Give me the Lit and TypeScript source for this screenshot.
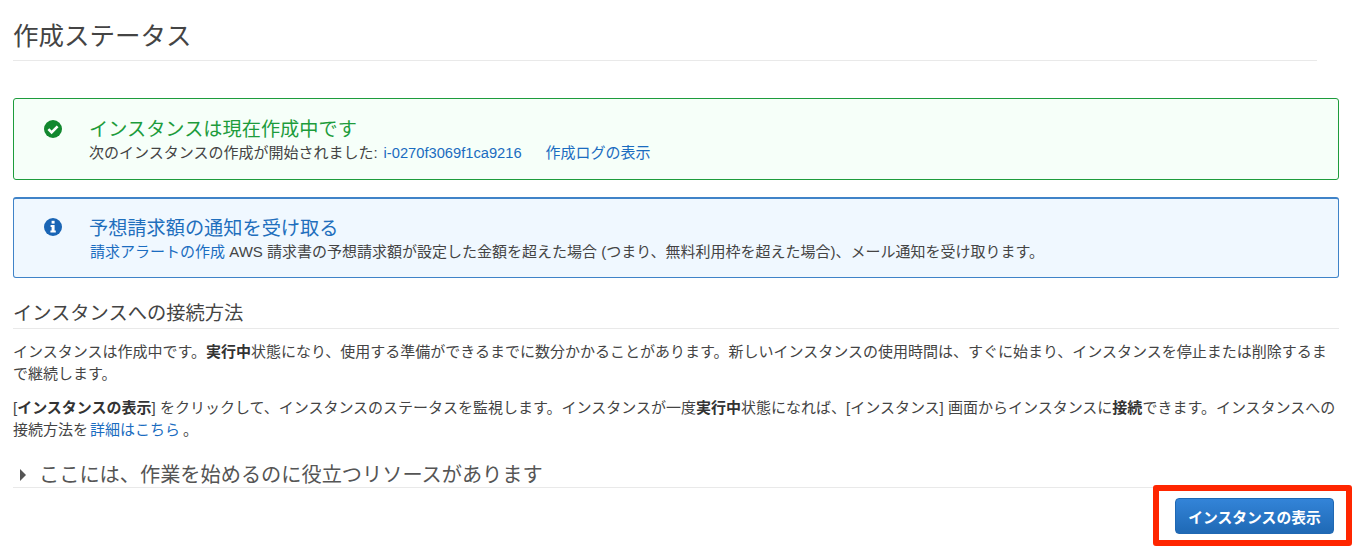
import { LitElement, html, css } from "lit";
import { customElement } from "lit/decorators.js";

@customElement("app-root")
export class AppRoot extends LitElement {
  static styles = css`
    :host {
      display: block;
      position: relative;
      width: 1352px;
      height: 560px;
      overflow: hidden;
      background: #fff;
      color: #444;
      font-family: "Liberation Sans", "Noto Sans CJK JP", sans-serif;
    }
    .page { padding: 18px 13px 0; display: flex; flex-direction: column; }
    h1 {
      margin: 0 22px 0 0;
      height: 42px;
      line-height: 36px;
      font-size: 25.5px;
      font-weight: 400;
      color: #444;
      border-bottom: 1px solid #e9e9e9;
    }
    .alert {
      box-sizing: border-box;
      height: 82px;
      border-radius: 3px;
      display: flex;
      padding: 18px 0 0 29px;
    }
    .alert svg { width: 20px; height: 20px; margin-top: 2px; flex: none; }
    .alert .body { margin-left: 26px; }
    .success { margin-top: 37px; background: #f6fff9; border: 1px solid #1d9c3c; }
    .info { margin-top: 17px; background: #f0f8ff; border: 1px solid #3f83c8; border-top-width: 2px; height: 81px; padding-top: 16px; }
    .title { font-size: 19.2px; line-height: 26px; }
    .success .title { color: #1d9c3c; }
    .info .title { color: #1f6fbd; line-height: 27px; }
    .sub { font-size: 15px; line-height: 19px; color: #444; white-space: nowrap; }
    .info .sub { padding-left: 1px; }
    a { color: #1a6cc0; text-decoration: none; }
    .sub a.log { margin-left: 24px; }
    .sub .id { margin-left: 6px; font-size: 14.7px; }
    h2 {
      margin: 23px 0 0;
      height: 27px;
      font-size: 19.25px;
      line-height: 26px;
      font-weight: 400;
      color: #444;
      border-bottom: 1px solid #e9e9e9;
    }
    p {
      margin: 0;
      font-size: 15px;
      line-height: 22px;
      color: #444;
    }
    p b { font-weight: 700; color: #333; }
    p.first { margin-top: 12px; }
    p.second { margin-top: 12px; }
    p a { margin: 0 3px 0 2px; }
    .expander {
      margin-top: 17px;
      height: 30px;
      box-sizing: border-box;
      padding-top: 4px;
      border-bottom: 1px solid #e9e9e9;
      display: flex;
      align-items: center;
      font-size: 20.2px;
      line-height: 28px;
      color: #555;
    }
    .expander svg { width: 8px; height: 12px; margin: 0 0 0 6px; flex: none; }
    .expander span { margin-left: 12px; }
    .actions { display: flex; justify-content: flex-end; padding: 10px 5px 0 0; }
    button {
      width: 159px;
      height: 36px;
      border: 1px solid #1f68b3;
      border-radius: 4px;
      background: linear-gradient(#3384d8, #1f69b5);
      color: #fff;
      font: 700 14.8px "Liberation Sans", "Noto Sans CJK JP", sans-serif;
      padding: 0;
    }
    .mark {
      position: absolute;
      left: 1153px;
      top: 485px;
      width: 199px;
      height: 61px;
      box-sizing: border-box;
      border: 6px solid #ff2600;
      border-radius: 3px;
      pointer-events: none;
    }
  `;

  render() {
    return html`
      <div class="page">
        <h1>作成ステータス</h1>
        <div class="alert success">
          <svg viewBox="0 0 20 20" aria-hidden="true">
            <circle cx="10" cy="10" r="9" fill="#12882f"></circle>
            <path d="M5.4 10.2l3.2 3.2 6-6" fill="none" stroke="#fff" stroke-width="2.6"></path>
          </svg>
          <div class="body">
            <div class="title">インスタンスは現在作成中です</div>
            <div class="sub">次のインスタンスの作成が開始されました:<a class="id" href="#">i-0270f3069f1ca9216</a><a class="log" href="#">作成ログの表示</a></div>
          </div>
        </div>
        <div class="alert info">
          <svg viewBox="0 0 20 20" aria-hidden="true">
            <circle cx="10" cy="10" r="9" fill="#1a65b5"></circle>
            <rect x="8.6" y="3.8" width="3" height="2.8" fill="#fff"></rect>
            <path d="M7.6 8h4v5.6h1.2v2H7.4v-2h1.2V10h-1z" fill="#fff"></path>
          </svg>
          <div class="body">
            <div class="title">予想請求額の通知を受け取る</div>
            <div class="sub"><a href="#">請求アラートの作成</a> AWS 請求書の予想請求額が設定した金額を超えた場合 (つまり、無料利用枠を超えた場合)、メール通知を受け取ります。</div>
          </div>
        </div>
        <h2>インスタンスへの接続方法</h2>
        <p class="first">インスタンスは作成中です。<b>実行中</b>状態になり、使用する準備ができるまでに数分かかることがあります。新しいインスタンスの使用時間は、すぐに始まり、インスタンスを停止または削除するまで継続します。</p>
        <p class="second">[<b>インスタンスの表示</b>] をクリックして、インスタンスのステータスを監視します。インスタンスが一度<b>実行中</b>状態になれば、[インスタンス] 画面からインスタンスに<b>接続</b>できます。インスタンスへの接続方法を<a href="#">詳細はこちら</a>。</p>
        <div class="expander">
          <svg viewBox="0 0 8 12" aria-hidden="true"><path d="M1 0l6 6-6 6z" fill="#555"></path></svg>
          <span>ここには、作業を始めるのに役立つリソースがあります</span>
        </div>
        <div class="actions"><button>インスタンスの表示</button></div>
      </div>
      <div class="mark"></div>
    `;
  }
}
